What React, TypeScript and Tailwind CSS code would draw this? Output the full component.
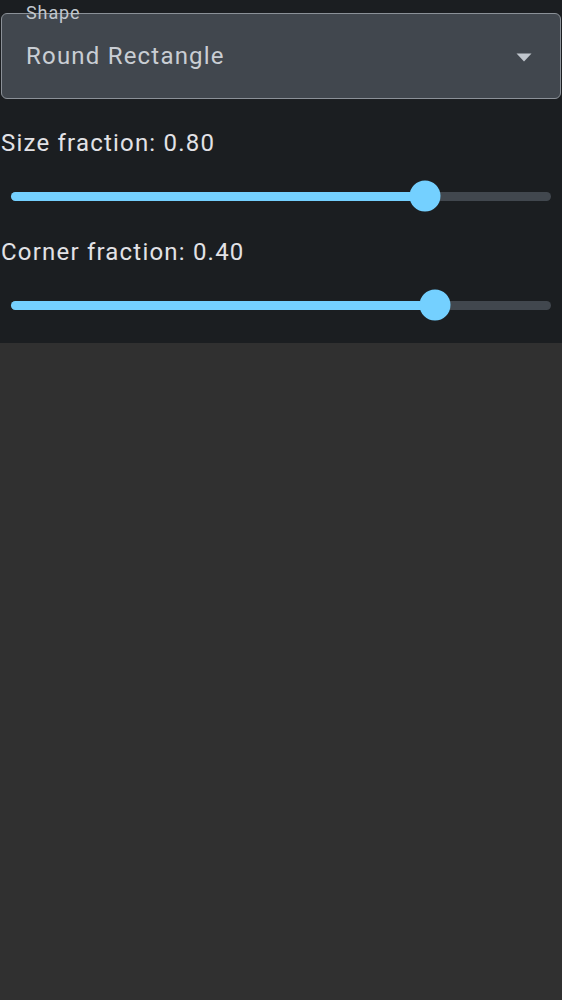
import React from 'react';

type SliderRowProps = {
  label: string;
  thumbX: number; // thumb centre, px from the left of the page
};

function SliderRow({ label, thumbX }: SliderRowProps) {
  return (
    <div>
      <div className="text-[24px] leading-[28px] tracking-[0.05em] text-[#e2e2e6] pl-[1px]">{label}</div>
      <div className="mt-[15px] h-[48px] flex items-center px-[11px]">
        <div className="relative w-full h-[9px] rounded-full bg-[#41474e]">
          <div
            className="absolute left-0 top-0 h-full rounded-full bg-[#74d0ff]"
            style={{ width: `${thumbX - 11}px` }}
          />
          <div
            className="absolute top-1/2 w-[31px] h-[31px] -translate-y-1/2 -translate-x-1/2 rounded-full bg-[#74d0ff]"
            style={{ left: `${thumbX - 11}px` }}
          />
        </div>
      </div>
    </div>
  );
}

export default function App() {
  return (
    <div
      className="w-[562px] h-[1000px] bg-[#303030] flex flex-col"
      style={{ fontFamily: 'Roboto, "Noto Sans", sans-serif' }}
    >
      <div className="bg-[#1b1e21] pt-[13px] pb-[14px]">
        {/* Shape dropdown */}
        <div className="relative mx-[1px] h-[86px] rounded-[6px] border border-[#8b9198] bg-[#41474e] flex items-center pl-[24px] pr-[28px]">
          <span className="absolute left-[24px] top-[-10px] text-[18px] leading-[18px] tracking-[0.05em] text-[#c1c7ce]">Shape</span>
          <span className="flex-1 text-[24px] leading-[28px] tracking-[0.05em] text-[#c9ced4]">Round Rectangle</span>
          <svg width="16" height="9" viewBox="0 0 16 9" className="mt-[2px]">
            <path d="M0.5 0.5 L15.5 0.5 L8 8.5 Z" fill="#c1c7ce" />
          </svg>
        </div>

        <div className="mt-[30px]">
          <SliderRow label="Size fraction: 0.80" thumbX={425} />
        </div>
        <div className="mt-[18px]">
          <SliderRow label="Corner fraction: 0.40" thumbX={435} />
        </div>
      </div>
    </div>
  );
}
